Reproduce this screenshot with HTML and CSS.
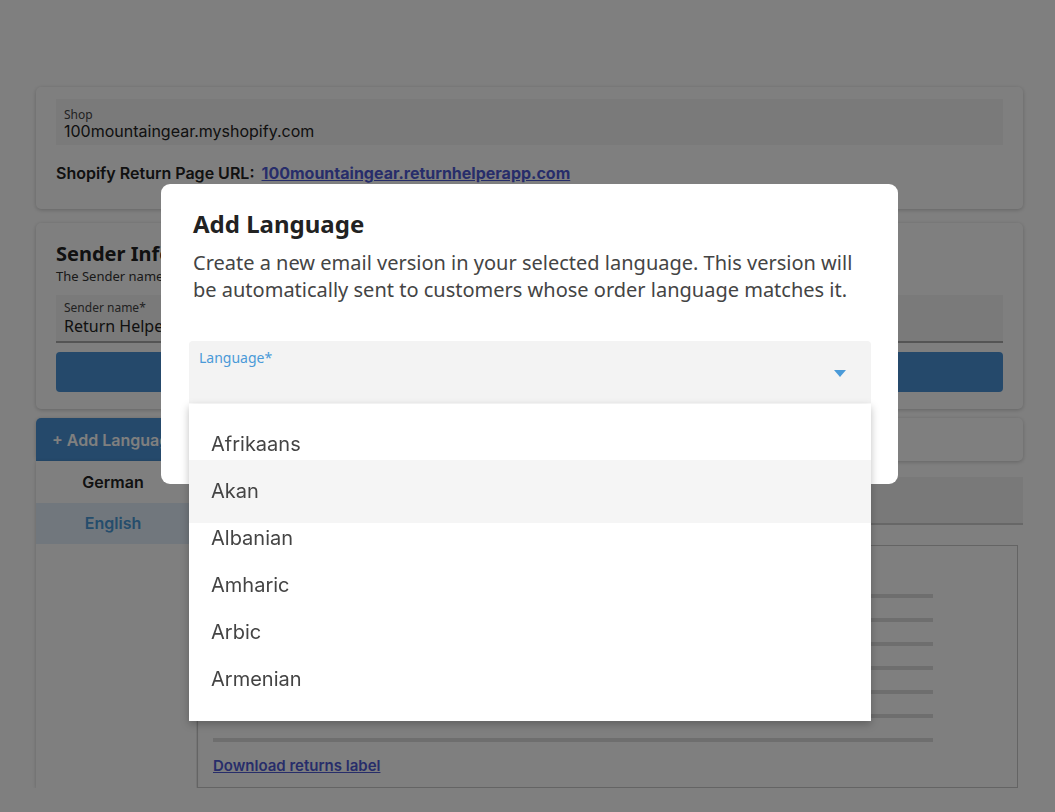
FILE: index.html
```html
<!DOCTYPE html>
<html lang="en">
<head>
  <meta charset="UTF-8" />
  <meta name="viewport" content="width=device-width, initial-scale=1" />
  <title>Email Settings</title>
  <link rel="stylesheet" href="styles.css">
</head>
<body>
  <div class="page">
    <div class="card shop-card">
      <div class="field">
        <span class="field-label">Shop</span>
        <span class="field-value">100mountaingear.myshopify.com</span>
      </div>
      <div class="url-row">
        <span class="url-label">Shopify Return Page URL:</span>
        <a href="#" class="url-link">100mountaingear.returnhelperapp.com</a>
      </div>
    </div>

    <div class="card sender-card">
      <h2>Sender Information</h2>
      <p class="sender-hint">The Sender name and email address are used for all outgoing emails.</p>
      <div class="field field-line">
        <span class="field-label">Sender name*</span>
        <span class="field-value noto">Return Helper</span>
      </div>
      <button class="save-button" type="button">Save</button>
    </div>

    <div class="card lang-bar">
      <button class="add-lang" type="button">+ Add Language</button>
    </div>

    <div class="editor">
      <ul class="lang-list">
        <li>German</li>
        <li class="active">English</li>
      </ul>
      <div class="editor-main">
        <div class="tab-bar"></div>
        <div class="preview">
          <div class="preview-line"></div>
          <div class="preview-line"></div>
          <div class="preview-line"></div>
          <div class="preview-line"></div>
          <div class="preview-line"></div>
          <div class="preview-line"></div>
          <div class="preview-line"></div>
          <a href="#" class="download-link">Download returns label</a>
        </div>
      </div>
    </div>
  </div>

  <div class="overlay">
    <div class="modal">
      <h1>Add Language</h1>
      <p>Create a new email version in your selected language. This version will be automatically sent to customers whose order language matches it.</p>
      <div class="select">
        <span class="select-label">Language*</span>
        <span class="select-arrow"></span>
        <ul class="select-menu">
          <li>Afrikaans</li>
          <li class="hover">Akan</li>
          <li>Albanian</li>
          <li>Amharic</li>
          <li>Arbic</li>
          <li>Armenian</li>
        </ul>
      </div>
    </div>
  </div>
</body>
</html>
```

FILE: styles.css
```css
body {
  margin: 0;
  background: #fff;
  font-family: 'Inter', 'Liberation Sans', sans-serif;
  color: #222;
}
.page {
  width: 987px;
  padding: 87px 0 0 36px;
}
.card {
  background: #fff;
  border-radius: 5px;
  box-shadow: 0 1px 4px rgba(0, 0, 0, 0.22);
}
.shop-card {
  padding: 12px 20px 27px;
}
.field {
  display: flex;
  flex-direction: column;
  background: #f4f4f4;
  padding: 9px 8px 5px;
  height: 32px;
}
.field-label {
  font-family: 'Noto Sans', sans-serif;
  font-size: 12px;
  line-height: 14px;
  color: #444;
}
.field-value {
  font-size: 16px;
  line-height: 18px;
  color: #222;
}
.field-value.noto {
  font-family: 'Noto Sans', sans-serif;
  font-size: 16px;
}
.url-row {
  margin-top: 19px;
  font-size: 16px;
  line-height: 18px;
  font-weight: 600;
}
.url-label {
  margin-right: 3px;
}
.url-link {
  color: #4f5bd5;
  font-weight: 700;
}
.sender-card {
  margin-top: 14px;
  padding: 19px 20px 17px;
}
.sender-card h2 {
  margin: 0;
  font-family: 'Noto Sans', sans-serif;
  font-size: 20px;
  line-height: 24px;
  font-weight: 700;
}
.sender-hint {
  margin: 1px 0 10px;
  font-family: 'Noto Sans', sans-serif;
  font-size: 13px;
  line-height: 18px;
  color: #333;
}
.field-line {
  border-bottom: 2px solid #aaa;
  height: 33px;
  padding: 6px 8px 7px;
}
.field-line .field-label {
  margin-bottom: 2px;
}
.save-button {
  display: block;
  width: 100%;
  height: 40px;
  margin-top: 9px;
  border: none;
  border-radius: 4px;
  background: #4a92d6;
  color: #fff;
  font-size: 15px;
}
.lang-bar {
  margin-top: 9px;
  height: 43px;
  display: flex;
}
.add-lang {
  width: 160px;
  border: none;
  border-radius: 5px 0 0 0;
  background: #4a92d6;
  color: #fff;
  font-family: 'Inter', sans-serif;
  font-size: 16px;
  font-weight: 600;
  text-align: left;
  padding-left: 16px;
}
.editor {
  display: flex;
  height: 327px;
}
.lang-list {
  list-style: none;
  margin: 0;
  padding: 0;
  width: 160px;
  background: #fff;
  box-shadow: 0 1px 4px rgba(0, 0, 0, 0.2);
}
.lang-list li {
  height: 42px;
  line-height: 42px;
  padding-right: 6px;
  text-align: center;
  font-size: 16px;
  font-weight: 600;
  color: #222;
}
.lang-list li.active {
  height: 41px;
  line-height: 41px;
  background: #e2eefa;
  color: #4a9ad8;
}
.editor-main {
  flex: 1;
  padding-left: 1px;
}
.tab-bar {
  margin-top: 16px;
  height: 46px;
  background: #f3f3f3;
  border-bottom: 2px solid #cfcfcf;
}
.preview {
  margin-top: 20px;
  width: 821px;
  height: 243px;
  border: 1px solid #c8c8c8;
  padding: 48px 0 0 15px;
  box-sizing: border-box;
}
.preview-line {
  width: 720px;
  height: 4px;
  background: #dcdcdc;
  margin-bottom: 20px;
}
.download-link {
  display: block;
  width: max-content;
  margin-top: -5px;
  color: #4f5bd5;
  font-size: 15px;
  font-weight: 600;
  line-height: 18px;
}
.overlay {
  position: fixed;
  inset: 0;
  background: rgba(0, 0, 0, 0.5);
  display: flex;
  justify-content: center;
  align-items: flex-start;
  padding: 184px 0 0 4px;
}
.modal {
  width: 737px;
  height: 300px;
  box-sizing: border-box;
  background: #fff;
  border-radius: 9px;
  padding: 24px 32px 0;
  font-family: 'Noto Sans', sans-serif;
}
.modal h1 {
  margin: 0;
  font-size: 24px;
  line-height: 32px;
  font-weight: 700;
  color: #222;
}
.modal p {
  margin: 9px 0 0;
  font-size: 20px;
  line-height: 27px;
  color: #444;
}
.select {
  position: relative;
  margin: 38px -5px 0 -4px;
  height: 62px;
  background: #f3f3f3;
  border-radius: 4px 4px 0 0;
}
.select-label {
  position: absolute;
  left: 10px;
  top: 8px;
  font-size: 14px;
  line-height: 18px;
  color: #4a9ad8;
}
.select-arrow {
  position: absolute;
  right: 25px;
  top: 29px;
  border-left: 6px solid transparent;
  border-right: 6px solid transparent;
  border-top: 7px solid #4a9ad8;
}
.select-menu {
  position: absolute;
  left: 0;
  right: 0;
  top: 63px;
  list-style: none;
  margin: 0;
  padding: 17px 0 18px;
  background: #fff;
  box-shadow: 0 3px 8px rgba(0, 0, 0, 0.25);
  font-family: 'Inter', sans-serif;
}
.select-menu li {
  height: 47px;
  line-height: 47px;
  padding-left: 22px;
  font-size: 20px;
  color: #444;
}
.select-menu li.hover {
  background: #f5f5f5;
  box-shadow: 0 -8px 0 #f5f5f5, 0 8px 0 #f5f5f5;
}
```
